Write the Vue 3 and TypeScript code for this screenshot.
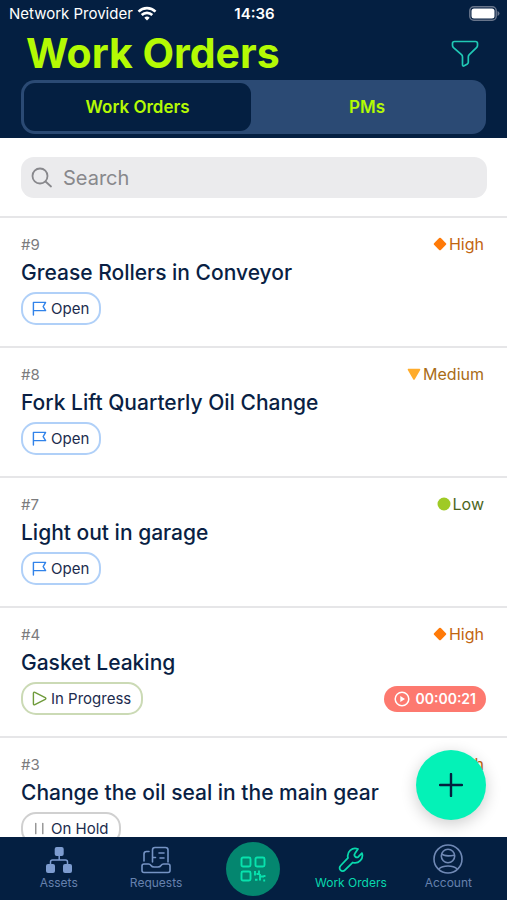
<script setup lang="ts">
import { ref } from 'vue'

type Priority = 'High' | 'Medium' | 'Low'
type Status = 'Open' | 'In Progress' | 'On Hold'

interface WorkOrder {
  id: number
  title: string
  priority: Priority
  status: Status
  timer?: string
}

const orders: WorkOrder[] = [
  { id: 9, title: 'Grease Rollers in Conveyor', priority: 'High', status: 'Open' },
  { id: 8, title: 'Fork Lift Quarterly Oil Change', priority: 'Medium', status: 'Open' },
  { id: 7, title: 'Light out in garage', priority: 'Low', status: 'Open' },
  { id: 4, title: 'Gasket Leaking', priority: 'High', status: 'In Progress', timer: '00:00:21' },
  { id: 3, title: 'Change the oil seal in the main gear', priority: 'High', status: 'On Hold' },
]

const tabs = ['Work Orders', 'PMs']
const activeTab = ref('Work Orders')
const query = ref('')

const statusClass: Record<Status, string> = {
  Open: 'open',
  'In Progress': 'progress',
  'On Hold': 'hold',
}
</script>

<template>
  <div class="app">
    <header class="header">
      <div class="status-bar">
        <div class="carrier">
          <span>Network Provider</span>
          <svg width="20" height="15" viewBox="0 0 20 15" fill="none" stroke="#fff" stroke-width="2.6">
            <path d="M1.5 5.6a12.2 12.2 0 0 1 17 0" />
            <path d="M4.7 9a7.6 7.6 0 0 1 10.600 0" />
            <path d="M10 14.500 7.300 11.700a3.900 3.900 0 0 1 5.400 0z" fill="#fff" stroke="none" />
          </svg>
        </div>
        <time class="clock">14:36</time>
        <svg class="battery" width="31" height="15" viewBox="0 0 31 15">
          <rect x=".8" y=".8" width="26.400" height="13.400" rx="4" fill="none" stroke="#68758b" stroke-width="1.500" />
          <rect x="2.500" y="2.500" width="23" height="10" rx="2.500" fill="#fff" />
          <path d="M28.500 5v5q2-.7 2-2.500t-2-2.500z" fill="#68758b" />
        </svg>
      </div>
      <div class="title-row">
        <h1>Work Orders</h1>
        <button class="filter" type="button" aria-label="Filter">
          <svg width="28" height="28" viewBox="0 0 28 28" fill="none" stroke="#20c9b5" stroke-width="1.700" stroke-linejoin="round">
            <path d="M3.500 1.500h21q2 0 2 2v2q0 1.200-1 2.200l-7.200 7q-1 1-1 2.300v5.200q0 1-.9 1.700l-3.200 1.900q-1.700.8-1.700-1.200v-7.600q0-1.300-1-2.300l-8-7q-1-1-1-2.200v-2q0-2 2-2z" />
          </svg>
        </button>
      </div>
      <div class="tabs" role="tablist">
        <button
          v-for="tab in tabs"
          :key="tab"
          type="button"
          role="tab"
          class="tab"
          :class="{ active: activeTab === tab }"
          :aria-selected="activeTab === tab"
          @click="activeTab = tab"
        >{{ tab }}</button>
      </div>
    </header>

    <main class="content">
      <div class="scroll">
        <div class="search-area">
          <label class="search">
            <svg width="22" height="22" viewBox="0 0 22 22" fill="none" stroke="#88888c" stroke-width="1.800" stroke-linecap="round">
              <circle cx="9" cy="9" r="7.500" />
              <path d="m14.500 14.500 5.500 5" />
            </svg>
            <input v-model="query" type="text" placeholder="Search" aria-label="Search" />
          </label>
        </div>

        <ul class="orders">
          <li v-for="order in orders" :key="order.id" class="order">
            <div class="meta">
              <span class="number">#{{ order.id }}</span>
              <span class="priority" :class="order.priority.toLowerCase()">
                <svg width="14" height="14" viewBox="0 0 14 14">
                  <rect v-if="order.priority === 'High'" x="2.200" y="2.200" width="9.600" height="9.600" rx="1.200" transform="rotate(45 7 7)" fill="#ff7a08" />
                  <path v-else-if="order.priority === 'Medium'" d="M1.500 2.500h11L7 12z" fill="#ffac2c" stroke="#ffac2c" stroke-width="1.600" stroke-linejoin="round" />
                  <circle v-else cx="7" cy="7" r="6.500" fill="#9fca26" />
                </svg>
                {{ order.priority }}
              </span>
            </div>
            <h2>{{ order.title }}</h2>
            <div class="state">
              <span class="chip" :class="statusClass[order.status]">
                <svg width="15" height="15" viewBox="0 0 16 16" fill="none" stroke-width="1.500" stroke-linejoin="round" stroke-linecap="round">
                  <path v-if="order.status === 'Open'" d="M1.500 15V1.500h13l-2.600 4.400 2.600 4.400h-13" stroke="#3183ea" />
                  <path v-else-if="order.status === 'In Progress'" d="M1.500 2.500q0-1.800 1.600-1l11 5.600q1.400.9 0 1.800l-11 5.600q-1.600.8-1.600-1z" stroke="#6f9b3b" />
                  <path v-else d="M4 2.500v11M11.500 2.500v11" stroke="#929292" />
                </svg>
                {{ order.status }}
              </span>
              <span v-if="order.timer" class="timer">
                <svg width="16" height="16" viewBox="0 0 16 16" fill="none" stroke="#fff" stroke-width="1.500">
                  <circle cx="8" cy="8" r="6.800" />
                  <path d="M6.300 5v6L11 8z" fill="#fff" stroke="none" />
                </svg>
                {{ order.timer }}
              </span>
            </div>
          </li>
        </ul>
      </div>
      <button class="add" type="button" aria-label="Add work order">
        <svg width="24" height="24" viewBox="0 0 24 24" stroke="#04203f" stroke-width="2.400" stroke-linecap="round">
          <path d="M12 1v22M1 12h22" />
        </svg>
      </button>
    </main>

    <nav class="nav">
      <a href="#assets">
        <svg width="28" height="28" viewBox="0 0 28 28" fill="#7d9cd0">
          <rect x="9.700" y="1" width="9" height="9" rx="2" />
          <rect x="1" y="18" width="9" height="9" rx="2" />
          <rect x="18" y="18" width="9" height="9" rx="2" />
          <path d="M14.200 9v5M5.500 19v-3q0-2 2-2h13q2 0 2 2v3" fill="none" stroke="#7d9cd0" stroke-width="1.500" />
        </svg>
        <span>Assets</span>
      </a>
      <a href="#requests">
        <svg width="30" height="28" viewBox="0 0 30 28" fill="none" stroke="#7593c4" stroke-width="1.600" stroke-linecap="round" stroke-linejoin="round">
          <path d="M3 15V8q0-2.500 2.500-2.500H8M11.500 16V4q0-2.500 2.500-2.500h10.500q2.500 0 2.500 2.500V16M18 7h5M19 12h4M12 11.500h2.500" />
          <path d="M3 18h4.500q1.500 0 2.500 1.500T13 21h4q2 0 3-1.500t2.500-1.500H27q2 0 2 2v4.500q0 2-2 2H3q-2 0-2-2V20q0-2 2-2z" />
        </svg>
        <span>Requests</span>
      </a>
      <a href="#scan" class="scan" aria-label="Scan code">
        <svg width="26" height="26" viewBox="0 0 26 26" fill="none" stroke="#08e2ad" stroke-width="1.900" stroke-linejoin="round">
          <rect x="1.500" y="1.500" width="9" height="9" rx="1.500" />
          <rect x="15.500" y="1.500" width="9" height="9" rx="1.500" />
          <rect x="1.500" y="15.500" width="9" height="9" rx="1.500" />
          <path d="M15 15v4.500M19 14.500V18M19.500 18H16.500M20 18v6.500M20 20.500h4M24.500 19v2M15 23.800h2.500M24.200 23.500v2" />
        </svg>
      </a>
      <a href="#work-orders" class="current" aria-current="page">
        <svg width="26" height="28" viewBox="0 0 28 28" fill="none" stroke="#08d9ad" stroke-width="1.900" stroke-linejoin="round">
          <path d="M21.500 2.200a8 8 0 0 0-10.700 9.600L2.700 20.200a3.300 3.300 0 0 0 0 4.700 3.300 3.300 0 0 0 4.700 0l8.300-8.200A8 8 0 0 0 25.800 6.500l-4 4.200q-1.600 1.200-3.200-.2-1.700-1.700-.4-3.400z" />
        </svg>
        <span>Work Orders</span>
      </a>
      <a href="#account">
        <svg width="30" height="30" viewBox="0 0 30 30" fill="none" stroke="#7089b5" stroke-width="1.600">
          <circle cx="15" cy="15" r="14" />
          <circle cx="15" cy="12" r="6.700" />
          <path d="M8.500 9.800q3 3.200 13 1.400M5.800 25q3.200-3 9.200-3t9.200 3" />
        </svg>
        <span>Account</span>
      </a>
    </nav>
  </div>
</template>

<style>
body {
  margin: 0;
}
</style>

<style scoped>
.app {
  display: flex;
  flex-direction: column;
  height: 100vh;
  background: #fff;
  color: #0a1f44;
  font-family: Inter, "Liberation Sans", sans-serif;
}

button {
  border: 0;
  padding: 0;
  background: none;
  font: inherit;
  cursor: pointer;
}

svg {
  display: block;
  flex: none;
}

.header {
  flex: none;
  padding-bottom: 4px;
  background: #041f41;
}

.status-bar {
  display: grid;
  grid-template-columns: 1fr auto 1fr;
  align-items: center;
  height: 27px;
  padding: 0 7px 0 9px;
  color: #fff;
  font-size: 15px;
}

.carrier {
  display: flex;
  align-items: center;
  gap: 4px;
  font-size: 14px;
}

.carrier span {
  font-size: 15px;
}

.clock {
  font-weight: 600;
}

.battery {
  justify-self: end;
}

.title-row {
  display: flex;
  align-items: center;
  justify-content: space-between;
  height: 53px;
  padding: 0 28px 0 26px;
}

h1 {
  margin: 0;
  color: #b4fa04;
  font-size: 41px;
  font-weight: 700;
  line-height: 53px;
}

.tabs {
  display: grid;
  grid-template-columns: 49.500% 50.500%;
  margin: 0 21px;
  padding: 3px;
  border-radius: 14px;
  background: #2b4a74;
}

.tab {
  height: 48px;
  border-radius: 11px;
  color: #b4fa04;
  font-size: 17px;
  font-weight: 600;
}

.tab.active {
  background: #041f41;
}

.content {
  position: relative;
  flex: 1;
  min-height: 0;
}

.scroll {
  height: 100%;
  overflow-y: auto;
  scrollbar-width: none;
}

.search-area {
  padding: 19px 20px 18px 21px;
}

.search {
  display: flex;
  align-items: center;
  gap: 10px;
  height: 41px;
  padding: 0 10px;
  border-radius: 13px;
  background: #ebebed;
}

.search input {
  flex: 1;
  min-width: 0;
  padding: 0;
  border: 0;
  outline: 0;
  background: none;
  color: #0a1f44;
  font: 20px Inter, "Liberation Sans", sans-serif;
}

.search input::placeholder {
  color: #88888c;
  opacity: 1;
}

.orders {
  margin: 0;
  padding: 0;
  list-style: none;
}

.order {
  padding: 16px 21px 21px;
  border-top: 2px solid #e6e6e8;
}

.meta,
.state {
  display: flex;
  align-items: center;
  justify-content: space-between;
}

.meta {
  height: 20px;
  padding-right: 2px;
}

.number {
  color: #7b7b7d;
  font-size: 15px;
}

.priority {
  display: flex;
  align-items: center;
  gap: 2px;
  font-size: 16px;
}

.high {
  color: #c2640f;
}

.medium {
  color: #a96c16;
}

.low {
  color: #4c661c;
}

h2 {
  margin: 5px 0;
  font-size: 21px;
  font-weight: 500;
  line-height: 28px;
}

.chip {
  display: flex;
  align-items: center;
  gap: 4px;
  box-sizing: border-box;
  height: 33px;
  padding: 0 10px 0 9px;
  border: 2px solid;
  border-radius: 15px;
  color: #1c2c4e;
  font-size: 15px;
}

.chip.open {
  border-color: #b0d0f8;
}

.chip.progress {
  border-color: #cbdab5;
}

.chip.hold {
  border-color: #d0d0d0;
}

.timer {
  display: flex;
  align-items: center;
  gap: 5px;
  height: 26px;
  padding: 0 10px;
  border-radius: 13px;
  background: #fd796f;
  color: #fff;
  font-size: 14px;
  font-weight: 600;
}

.add {
  position: absolute;
  right: 21px;
  bottom: 17px;
  display: grid;
  place-items: center;
  width: 70px;
  height: 70px;
  border-radius: 50%;
  background: #04f2b7;
  box-shadow: 0 4px 16px rgba(0, 0, 0, 0.2);
}

.nav {
  display: grid;
  flex: none;
  grid-template-columns: repeat(5, 1fr);
  height: 63px;
  padding: 0 10px;
  background: #041f41;
}

.nav a {
  display: flex;
  flex-direction: column;
  align-items: center;
  justify-content: flex-end;
  gap: 1px;
  box-sizing: border-box;
  padding-bottom: 9px;
  color: #6681ae;
  font-size: 12px;
  line-height: 16px;
  text-decoration: none;
  white-space: nowrap;
}

.nav a.current {
  color: #08d9ad;
}

.nav a.scan {
  align-self: center;
  justify-self: center;
  justify-content: center;
  width: 54px;
  height: 54px;
  padding: 0;
  border-radius: 50%;
  background: #04866f;
}
</style>
